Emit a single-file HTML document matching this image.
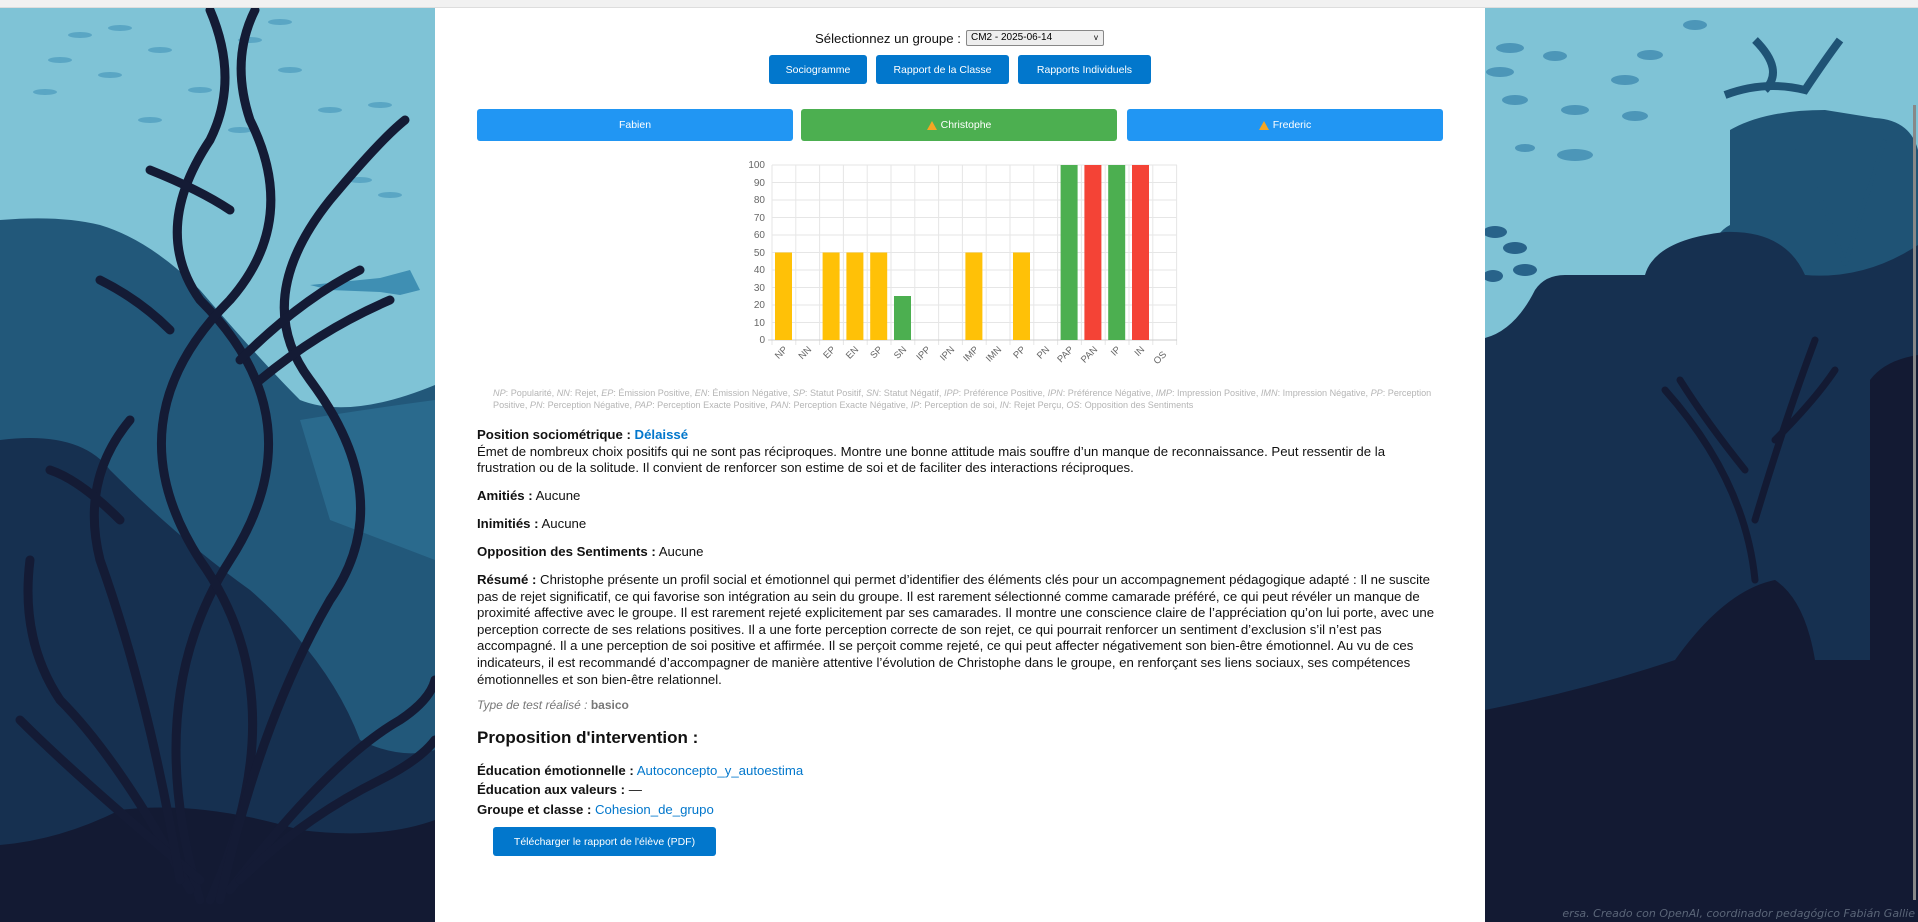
<!DOCTYPE html>
<html><head><meta charset="utf-8"><style>
*{margin:0;padding:0;box-sizing:border-box}
body{width:1918px;height:922px;overflow:hidden;position:relative;font-family:"Liberation Sans",Arial,sans-serif;background:#7fc3d6}
.a{position:absolute}
.panel{position:absolute;left:435px;top:8px;width:1050px;height:914px;background:#fff}
.btn{position:absolute;background:#0277cc;color:#fff;font-size:10.5px;border-radius:3px;display:flex;align-items:center;justify-content:center}
.sb{position:absolute;color:#fff;font-size:10.5px;border-radius:3px;display:flex;align-items:center;justify-content:center;top:109px;height:32px}
.t{position:absolute;left:477px;width:965px;font-size:13.2px;line-height:16.6px;color:#111}
b{font-weight:bold}
.lk{color:#0277cc}
.warn{display:inline-block;width:0;height:0;border-left:5px solid transparent;border-right:5px solid transparent;border-bottom:9px solid #f5a623;margin-right:4px;vertical-align:-1px}
</style></head><body>
<svg class="a" style="left:0;top:0" width="435" height="922" viewBox="0 0 435 922">
<rect width="435" height="922" fill="#7fc3d6"/>
<g fill="#5aa6c4">
<ellipse cx="80" cy="35" rx="12" ry="3"/><ellipse cx="120" cy="28" rx="12" ry="3"/><ellipse cx="60" cy="60" rx="12" ry="3"/><ellipse cx="110" cy="75" rx="12" ry="3"/><ellipse cx="160" cy="50" rx="12" ry="3"/><ellipse cx="200" cy="90" rx="12" ry="3"/><ellipse cx="250" cy="40" rx="12" ry="3"/><ellipse cx="290" cy="70" rx="12" ry="3"/><ellipse cx="330" cy="110" rx="12" ry="3"/><ellipse cx="380" cy="105" rx="12" ry="3"/><ellipse cx="45" cy="92" rx="12" ry="3"/><ellipse cx="150" cy="120" rx="12" ry="3"/><ellipse cx="240" cy="130" rx="12" ry="3"/><ellipse cx="360" cy="180" rx="12" ry="3"/><ellipse cx="390" cy="195" rx="12" ry="3"/><ellipse cx="280" cy="22" rx="12" ry="3"/>
</g>
<path d="M310 285 L380 278 L410 270 L420 290 L400 295 L380 292 L330 290Z" fill="#3f8fb3"/>
<path d="M0 220 Q60 215 100 225 Q150 240 200 290 Q260 360 300 400 Q350 420 435 385 L435 922 L0 922Z" fill="#22587a"/>
<path d="M300 420 Q360 410 435 400 L435 560 L330 520Z" fill="#2a6a8d"/>
<path d="M0 440 Q80 430 110 470 Q180 540 250 590 Q330 660 360 740 Q400 760 435 750 L435 922 L0 922Z" fill="#163050"/>
<path d="M0 845 Q60 840 120 810 Q200 800 300 830 Q380 840 435 820 L435 922 L0 922Z" fill="#131a33"/>
<g fill="none" stroke="#141b35" stroke-width="9" stroke-linecap="round">
<path d="M200 900 Q140 700 230 560 Q320 420 200 300 Q150 230 210 140 Q240 80 210 10"/>
<path d="M210 900 Q300 700 200 560 Q110 420 230 300 Q300 220 250 120 Q230 60 255 10"/>
<path d="M220 900 Q260 720 330 600 Q400 500 310 380 Q250 300 330 200 Q380 140 405 120"/>
<path d="M190 890 Q120 760 60 700 Q20 640 30 560"/>
<path d="M230 890 Q330 760 400 720 Q430 700 435 680"/>
<path d="M200 880 Q80 780 20 720"/>
<path d="M240 880 Q300 820 380 780 Q420 760 435 740"/>
<path d="M180 880 Q150 700 100 560 Q80 480 130 420"/>
<path d="M150 170 Q200 190 230 210"/><path d="M240 360 Q300 300 360 270"/><path d="M100 280 Q140 300 170 330"/>
<path d="M260 380 Q320 330 390 300"/><path d="M120 520 Q80 480 50 470"/>
</g>
</svg>
<svg class="a" style="left:1485px;top:0" width="433" height="922" viewBox="0 0 433 922">
<rect width="433" height="922" fill="#7fc3d6"/>
<g fill="#4c96b8"><ellipse cx="25" cy="48" rx="14" ry="5"/><ellipse cx="70" cy="56" rx="12" ry="5"/><ellipse cx="15" cy="72" rx="14" ry="5"/><ellipse cx="30" cy="100" rx="13" ry="5"/><ellipse cx="90" cy="110" rx="14" ry="5"/><ellipse cx="140" cy="80" rx="14" ry="5"/><ellipse cx="150" cy="116" rx="13" ry="5"/><ellipse cx="90" cy="155" rx="18" ry="6"/><ellipse cx="40" cy="148" rx="10" ry="4"/><ellipse cx="210" cy="25" rx="12" ry="5"/><ellipse cx="165" cy="55" rx="13" ry="5"/></g>
<g fill="#28638a"><ellipse cx="10" cy="232" rx="12" ry="6"/><ellipse cx="30" cy="248" rx="12" ry="6"/><ellipse cx="8" cy="276" rx="10" ry="6"/><ellipse cx="40" cy="270" rx="12" ry="6"/></g>
<path d="M245 225 L245 130 Q280 110 340 110 L390 118 Q425 120 433 150 L433 320 L220 320 Q215 240 245 225Z" fill="#1f5375"/>
<path d="M240 95 Q280 80 320 90 Q340 60 355 40 M280 90 Q300 70 270 40" stroke="#1f5375" stroke-width="8" fill="none"/>
<path d="M0 338 Q30 330 50 290 Q60 275 80 275 L160 275 Q170 240 240 232 Q300 230 320 275 Q380 280 433 245 L433 922 L0 922Z" fill="#163050"/>
<path d="M385 660 L385 380 Q400 360 433 355 L433 922 L385 922Z" fill="#131a33"/>
<path d="M0 710 Q100 690 190 660 Q240 590 290 580 Q320 600 330 660 L433 660 L433 922 L0 922Z" fill="#131a33"/>
<g fill="none" stroke="#131a33" stroke-width="7" stroke-linecap="round"><path d="M270 580 Q260 480 180 390 M270 520 Q300 420 330 340 M260 470 Q220 420 195 380 M290 440 Q330 400 350 370"/></g>
<g fill="none" stroke="#1f5375" stroke-width="4"><path d="M360 265 Q340 200 310 150 M360 265 Q380 200 400 140"/></g>
<text x="430" y="917" text-anchor="end" font-size="11" font-style="italic" fill="#5a6578" font-family="DejaVu Sans,sans-serif">ersa. Creado con OpenAI, coordinador pedagógico Fabián Gallie</text>
<rect x="428" y="105" width="3" height="795" fill="#888"/>
</svg>
<div class="a" style="left:0;top:0;width:1918px;height:8px;background:#f1f1f1;border-bottom:1px solid #ddd"></div>
<div class="panel"></div>
<div class="a" style="left:815px;top:31px;font-size:13.2px;color:#111">Sélectionnez un groupe :</div>
<div class="a" style="left:966px;top:30px;width:138px;height:16px;border:1px solid #888;border-radius:2px;background:#eee;font-size:10px;padding-left:4px;line-height:14px">CM2 - 2025-06-14<span style="position:absolute;right:5px;font-size:8px">v</span></div>
<div class="btn" style="left:769px;top:55px;width:98px;height:29px">Sociogramme</div>
<div class="btn" style="left:876px;top:55px;width:133px;height:29px">Rapport de la Classe</div>
<div class="btn" style="left:1018px;top:55px;width:133px;height:29px">Rapports Individuels</div>
<div class="sb" style="left:477px;width:316px;background:#2196f3">Fabien</div>
<div class="sb" style="left:801px;width:316px;background:#4caf50"><span class="warn"></span>Christophe</div>
<div class="sb" style="left:1127px;width:316px;background:#2196f3"><span class="warn"></span>Frederic</div>
<svg class="a" style="left:720px;top:150px" width="480" height="230" font-family="Liberation Sans,Arial,sans-serif" font-size="10" fill="#666">
<g stroke="#e6e6e6" stroke-width="1">
<line x1="52" y1="15" x2="457" y2="15"/><line x1="52" y1="32.5" x2="457" y2="32.5"/><line x1="52" y1="50" x2="457" y2="50"/><line x1="52" y1="67.5" x2="457" y2="67.5"/><line x1="52" y1="85" x2="457" y2="85"/><line x1="52" y1="102.5" x2="457" y2="102.5"/><line x1="52" y1="120" x2="457" y2="120"/><line x1="52" y1="137.5" x2="457" y2="137.5"/><line x1="52" y1="155" x2="457" y2="155"/><line x1="52" y1="172.5" x2="457" y2="172.5"/>
<path d="M52 15V195M75.8 15V195M99.6 15V195M123.4 15V195M147.2 15V195M171 15V195M194.8 15V195M218.6 15V195M242.4 15V195M266.2 15V195M290 15V195M313.8 15V195M337.6 15V195M361.4 15V195M385.2 15V195M409 15V195M432.8 15V195M456.6 15V195"/>
</g>
<line x1="48" y1="190" x2="457" y2="190" stroke="#ccc"/>
<g text-anchor="end"><text x="45" y="18">100</text><text x="45" y="36">90</text><text x="45" y="53">80</text><text x="45" y="71">70</text><text x="45" y="88">60</text><text x="45" y="106">50</text><text x="45" y="123">40</text><text x="45" y="141">30</text><text x="45" y="158">20</text><text x="45" y="176">10</text><text x="45" y="193">0</text></g>
<g fill="#ffc107"><rect x="55" y="102.5" width="17" height="87.5"/><rect x="102.6" y="102.5" width="17" height="87.5"/><rect x="126.4" y="102.5" width="17" height="87.5"/><rect x="150.2" y="102.5" width="17" height="87.5"/><rect x="245.4" y="102.5" width="17" height="87.5"/><rect x="293" y="102.5" width="17" height="87.5"/></g>
<g fill="#4caf50"><rect x="174" y="146" width="17" height="44"/><rect x="340.6" y="15" width="17" height="175"/><rect x="388.2" y="15" width="17" height="175"/></g>
<g fill="#f44336"><rect x="364.4" y="15" width="17" height="175"/><rect x="412" y="15" width="17" height="175"/></g>
<g text-anchor="end" font-size="9.5">
<text transform="translate(68,200) rotate(-45)">NP</text><text transform="translate(92,200) rotate(-45)">NN</text><text transform="translate(116,200) rotate(-45)">EP</text><text transform="translate(139,200) rotate(-45)">EN</text><text transform="translate(163,200) rotate(-45)">SP</text><text transform="translate(187,200) rotate(-45)">SN</text><text transform="translate(211,200) rotate(-45)">IPP</text><text transform="translate(235,200) rotate(-45)">IPN</text><text transform="translate(259,200) rotate(-45)">IMP</text><text transform="translate(282,200) rotate(-45)">IMN</text><text transform="translate(306,200) rotate(-45)">PP</text><text transform="translate(330,200) rotate(-45)">PN</text><text transform="translate(354,200) rotate(-45)">PAP</text><text transform="translate(378,200) rotate(-45)">PAN</text><text transform="translate(401,200) rotate(-45)">IP</text><text transform="translate(425,200) rotate(-45)">IN</text><text transform="translate(447,205) rotate(-45)">OS</text>
</g></svg>
<div class="a" style="left:493px;top:387px;width:945px;font-size:9.1px;line-height:12.3px;color:#b5b5b5"><i>NP</i>: Popularité, <i>NN</i>: Rejet, <i>EP</i>: Émission Positive, <i>EN</i>: Émission Négative, <i>SP</i>: Statut Positif, <i>SN</i>: Statut Négatif, <i>IPP</i>: Préférence Positive, <i>IPN</i>: Préférence Négative, <i>IMP</i>: Impression Positive, <i>IMN</i>: Impression Négative, <i>PP</i>: Perception Positive, <i>PN</i>: Perception Négative, <i>PAP</i>: Perception Exacte Positive, <i>PAN</i>: Perception Exacte Négative, <i>IP</i>: Perception de soi, <i>IN</i>: Rejet Perçu, <i>OS</i>: Opposition des Sentiments</div>
<div class="t" style="top:427px"><b>Position sociométrique : </b><b class="lk">Délaissé</b><br>Émet de nombreux choix positifs qui ne sont pas réciproques. Montre une bonne attitude mais souffre d’un manque de reconnaissance. Peut ressentir de la frustration ou de la solitude. Il convient de renforcer son estime de soi et de faciliter des interactions réciproques.</div>
<div class="t" style="top:488px"><b>Amitiés :</b> Aucune</div>
<div class="t" style="top:516px"><b>Inimitiés :</b> Aucune</div>
<div class="t" style="top:544px"><b>Opposition des Sentiments :</b> Aucune</div>
<div class="t" style="top:572px"><b>Résumé :</b> Christophe présente un profil social et émotionnel qui permet d’identifier des éléments clés pour un accompagnement pédagogique adapté : Il ne suscite pas de rejet significatif, ce qui favorise son intégration au sein du groupe. Il est rarement sélectionné comme camarade préféré, ce qui peut révéler un manque de proximité affective avec le groupe. Il est rarement rejeté explicitement par ses camarades. Il montre une conscience claire de l’appréciation qu’on lui porte, avec une perception correcte de ses relations positives. Il a une forte perception correcte de son rejet, ce qui pourrait renforcer un sentiment d’exclusion s’il n’est pas accompagné. Il a une perception de soi positive et affirmée. Il se perçoit comme rejeté, ce qui peut affecter négativement son bien-être émotionnel. Au vu de ces indicateurs, il est recommandé d’accompagner de manière attentive l’évolution de Christophe dans le groupe, en renforçant ses liens sociaux, ses compétences émotionnelles et son bien-être relationnel.</div>
<div class="t" style="top:697px;font-size:12px;color:#777"><i>Type de test réalisé :</i> <b>basico</b></div>
<div class="t" style="top:727px;font-size:17px;line-height:22px"><b>Proposition d'intervention :</b></div>
<div class="t" style="top:763px"><b>Éducation émotionnelle :</b> <span class="lk">Autoconcepto_y_autoestima</span></div>
<div class="t" style="top:782px"><b>Éducation aux valeurs :</b> —</div>
<div class="t" style="top:802px"><b>Groupe et classe :</b> <span class="lk">Cohesion_de_grupo</span></div>
<div class="btn" style="left:493px;top:827px;width:223px;height:29px">Télécharger le rapport de l'élève (PDF)</div>
</body></html>
